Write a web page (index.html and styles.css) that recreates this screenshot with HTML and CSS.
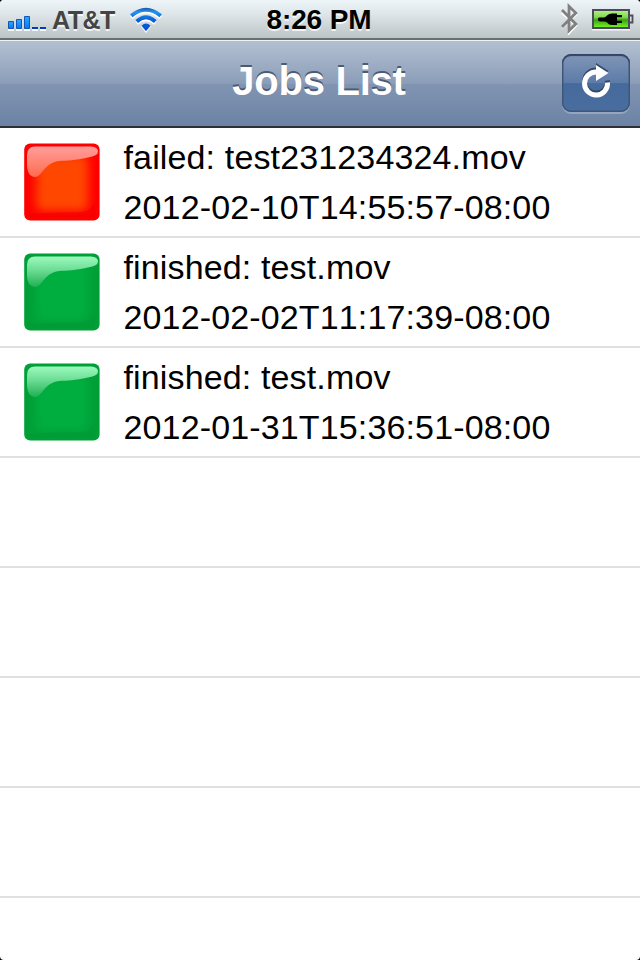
FILE: index.html
```html
<!DOCTYPE html>
<html lang="en">
<head>
<meta charset="utf-8">
<title>Jobs List</title>
<link rel="stylesheet" href="styles.css">
</head>
<body>
<svg class="defs" width="0" height="0" aria-hidden="true">
  <defs>
    <linearGradient id="gloss-red" x1="0" y1="0" x2="0" y2="1">
      <stop offset="0" stop-color="#ff9c9c"/>
      <stop offset=".5" stop-color="#ff8673"/>
      <stop offset="1" stop-color="#ff6a50"/>
    </linearGradient>
    <linearGradient id="gloss-green" x1="0" y1="0" x2="0" y2="1">
      <stop offset="0" stop-color="#9cfabe"/>
      <stop offset=".45" stop-color="#6cdc94"/>
      <stop offset="1" stop-color="#1fb052"/>
    </linearGradient>
    <filter id="soft" x="-30%" y="-30%" width="160%" height="160%"><feGaussianBlur stdDeviation="5"/></filter>
    <symbol id="tile" viewBox="0 0 76 78">
      <rect class="tile-base" x=".2" y=".4" width="75.4" height="77.2" rx="6"/>
      <rect class="tile-glow" x="12" y="12" width="52" height="56" rx="6" filter="url(#soft)"/>
      <path class="tile-shade" d="M3 71Q30 69 58 69Q68 68 71 58V70Q71 75 66 75H8Q4 75 3 71Z"/>
      <path class="tile-gloss" d="M3 12Q3 3.500 11 3.500H67Q74 4 74 8.500Q74 13 64 14.500C51 17.500 43 17.500 35 18C20 20 18 34 11 34C6 34 3 29 3 22Z"/>
    </symbol>
  </defs>
</svg>
<div class="phone">
  <header class="status">
    <div class="carrier">
      <svg class="signal" width="40" height="18" viewBox="0 0 40 18">
        <defs><linearGradient id="bar" x1="0" y1="0" x2="0" y2="1"><stop offset="0" stop-color="#28aaff"/><stop offset="1" stop-color="#0878ed"/></linearGradient></defs>
        <path fill="#fff" opacity=".85" d="M0 14H6V16H0ZM8 14H14V16H8ZM16 14H22V16H16ZM24 14H30V16H24ZM32 14H38V16H32Z"/>
        <g fill="url(#bar)" stroke="#1455b8" stroke-width="1"><path d="M.5 6.500H5.500V13.500H.5Z"/><path d="M8.500 4.500H13.500V13.500H8.500Z"/><path d="M16.500 1.500H21.500V13.500H16.500Z"/></g>
        <path fill="#003bc0" d="M24 12H30V14H24ZM32 12H38V14H32Z"/>
      </svg>
      <span class="name">AT&amp;T</span>
      <svg class="wifi" width="34" height="27" viewBox="0 0 34 27">
        <defs><linearGradient id="wave" x1="0" y1="0" x2="0" y2="25" gradientUnits="userSpaceOnUse"><stop offset="0" stop-color="#174b9e"/><stop offset=".2" stop-color="#2295ef"/><stop offset=".5" stop-color="#0d62dc"/><stop offset="1" stop-color="#004bd6"/></linearGradient></defs>
        <g fill="none" stroke="#fff" stroke-width="3.800" transform="translate(0 1.800)"><path d="M2.300 8.800Q17-3.200 31.700 8.800"/><path d="M7.700 14.500Q17 6.500 26.300 14.500"/></g>
        <path fill="#fff" d="M12 19.500Q17 14.500 22 19.500L17 26Z"/>
        <g fill="none" stroke="url(#wave)" stroke-width="3.900"><path d="M2.300 8.800Q17-3.200 31.700 8.800"/><path d="M7.700 14.500Q17 6 26.300 14.500"/></g>
        <path fill="url(#wave)" d="M12.500 18.800Q17 14 21.500 18.800L17 24.200Z"/>
      </svg>
    </div>
    <div class="clock">8:26 PM</div>
    <div class="indicators">
      <svg width="20" height="34" viewBox="0 0 20 34">
        <path d="M2 10L16 23L9 30.500V5L16 12L2 25" fill="none" stroke="#fff" stroke-width="2.500" transform="translate(0 1.500)"/>
        <path d="M2 9L15.800 23L9 29.700V5.300L15.800 12L2 26" fill="none" stroke="#808080" stroke-width="2.800" stroke-linejoin="miter"/>
      </svg>
      <svg class="battery" width="43" height="22" viewBox="0 0 43 22">
        <defs><linearGradient id="charge" x1="0" y1="0" x2="0" y2="1"><stop offset="0" stop-color="#b4f287"/><stop offset=".4" stop-color="#7fd94e"/><stop offset=".55" stop-color="#3ba012"/><stop offset="1" stop-color="#78fb20"/></linearGradient></defs>
        <path fill="#fff" opacity=".8" d="M0 19H38V21.500H0Z"/>
        <rect x="1" y="1" width="36" height="18" fill="url(#charge)" stroke="#4a4a5c" stroke-width="2"/>
        <path d="M38 6.500H40.500V13.500H38" fill="#d9dddf" stroke="#4a4f58" stroke-width="1.800"/>
        <path d="M6 9.500Q6 8.500 8 8.500H12Q14 8 15 6.500Q17 4.500 20 4.500H25V6H30V8.300H25V11.700H30V14H25V16H20Q17 16 15 13.500Q14 12.500 12 12.500H8Q6 12 6 11Z"/>
      </svg>
    </div>
  </header>
  <nav class="navbar">
    <h1>Jobs List</h1>
    <button class="refresh" aria-label="Refresh">
      <svg width="68" height="58" viewBox="0 0 68 58">
        <g transform="translate(0 -2)" fill="none" stroke="#344867" stroke-width="5"><path d="M45.500 28.500A11.500 11.500 0 1 1 34 18"/><path fill="#344867" stroke="none" d="M34 11L46.500 19L34 27Z"/></g>
        <path d="M45.500 28.500A11.500 11.500 0 1 1 34 18" fill="none" stroke="#fff" stroke-width="5"/>
        <path d="M34 11L46.500 19L34 27Z" fill="#fff"/>
      </svg>
    </button>
  </nav>
  <main class="list">
    <div class="row"><svg class="tile failed"><use href="#tile"/></svg><div class="job"><p>failed: test231234324.mov</p><p>2012-02-10T14:55:57-08:00</p></div></div>
    <div class="row"><svg class="tile finished"><use href="#tile"/></svg><div class="job"><p>finished: test.mov</p><p>2012-02-02T11:17:39-08:00</p></div></div>
    <div class="row"><svg class="tile finished"><use href="#tile"/></svg><div class="job"><p>finished: test.mov</p><p>2012-01-31T15:36:51-08:00</p></div></div>
    <div class="row"></div>
    <div class="row"></div>
    <div class="row"></div>
    <div class="row"></div>
  </main>
</div>
</body>
</html>
```
FILE: styles.css
```css
* { box-sizing: border-box; }
body { margin: 0; background: #000; font-family: "Liberation Sans", Arial, sans-serif; }
.defs { position: absolute; }
.phone { width: 640px; height: 960px; overflow: hidden; background: #fff; border-radius: 4px; }
.status {
  height: 40px;
  display: grid;
  grid-template-columns: 1fr auto 1fr;
  background: linear-gradient(#edf5f8 0, #dfe6e9 14px, #bdc4c6 38px, #65706f 38px, #65706f 40px);
  text-shadow: 0 2px 0 rgba(255, 255, 255, .75);
}
.carrier { display: flex; align-items: flex-start; padding-left: 8px; }
.signal { margin-top: 15px; }
.name { margin-left: 4px; width: 65px; color: #444; font: bold 25px/40px "Liberation Sans", Arial, sans-serif; letter-spacing: -.5px; }
.wifi { margin: 7px 0 0 12px; }
.clock { margin: 0 1px 0 -1px; color: #000; font-size: 28px; font-weight: bold; line-height: 39px; letter-spacing: -.1px; }
.indicators { display: flex; justify-content: flex-end; padding: 1px 5px 0 0; }
.battery { margin: 8px 0 0 12px; }
.navbar {
  height: 88px;
  display: grid;
  grid-template-columns: 78px 1fr 78px;
  border-top: 1px solid #eef1f5;
  border-bottom: 2px solid #2d3036;
  background: linear-gradient(#b3c0d2 0, #8b9db8 50%, #8194b2 51%, #6c83a5 100%);
}
h1 {
  grid-column: 2;
  margin: 0;
  text-align: center;
  color: #fff;
  font-size: 40px;
  font-weight: bold;
  line-height: 81px;
  letter-spacing: -.25px;
  text-indent: -2px;
  text-shadow: 0 -2px 0 #4b5b73;
}
.refresh {
  width: 68px;
  height: 58px;
  margin: 13px 0 0;
  padding: 0;
  border: 0;
  border-radius: 9px;
  background: linear-gradient(#8096b7 0, #5c7ba8 50%, #466a9c 51%, #496d9f 100%);
  box-shadow: inset 0 2px 1px #334764, inset 0 0 0 1.5px #3f5879, 0 2px 0 rgba(255, 255, 255, .25);
}
.refresh svg { display: block; }
.row { height: 110px; display: flex; border-bottom: 2px solid #e0e0e0; }
.tile { width: 76px; height: 78px; margin: 15px 0 0 24px; flex: none; }
.failed { --base: #fe0000; --glow: #ff4600; --shade: #f50000; --gloss: url(#gloss-red); }
.finished { --base: #009f37; --glow: #00ae40; --shade: #009936; --gloss: url(#gloss-green); }
.tile-base { fill: var(--base); }
.tile-glow { fill: var(--glow); }
.tile-shade { fill: var(--shade); opacity: .65; }
.tile-gloss { fill: var(--gloss); }
.job { padding: 4px 0 0 23.5px; }
.job p { margin: 0; font-size: 34px; line-height: 50px; letter-spacing: .14px; font-kerning: none; white-space: nowrap; color: #000; }
```
